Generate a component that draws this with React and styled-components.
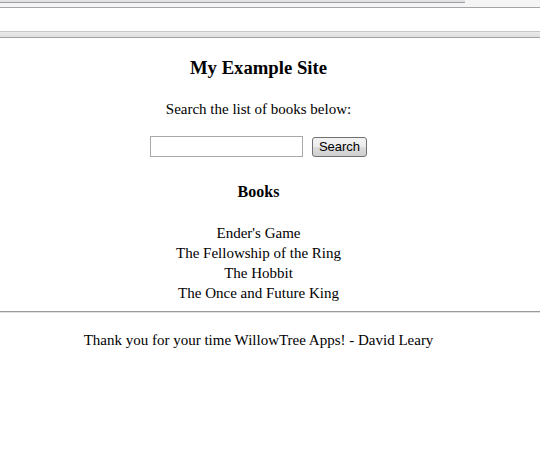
import React from 'react'
import styled, { createGlobalStyle } from 'styled-components'

const GlobalStyle = createGlobalStyle`
    html, body {
        margin: 0;
        padding: 0;
        background: #ffffff;
    }
    body {
        width: 540px;
        height: 453px;
        overflow: hidden;
        font-family: "Liberation Serif", "Times New Roman", serif;
        color: #000000;
    }
`

const Chrome = styled.div`
    display: flex;
    flex-direction: column;
`
const TabStrip = styled.div`
    display: flex;
    height: 7px;
    border-bottom: 1px solid #a5a5a5;
    background: #f5f5f5;
`
const TabEdge = styled.div`
    width: ${props => props.width}px;
    height: 2px;
    background: #e2e2e2;
    border-bottom: 1px solid #9a9ea6;
`
const AddressBand = styled.div`
    height: 23px;
    background: #ffffff;
`
const CommandBar = styled.div`
    height: 5px;
    border-top: 1px solid #c6c6c6;
    border-bottom: 1px solid #a3a3a3;
    background: linear-gradient(#ebebeb, #dfdfdf);
`

const Page = styled.main`
    display: flex;
    flex-direction: column;
`
const Content = styled.div`
    display: flex;
    flex-direction: column;
    align-items: center;
    width: 517px;
    padding-top: 19px;
`
const Title = styled.h3`
    margin: 0;
    font-size: 18.7px;
    line-height: 22px;
    font-weight: bold;
`
const Intro = styled.p`
    margin: 21px 0 0;
    font-size: 15px;
    line-height: 18px;
`
const SearchForm = styled.form`
    display: flex;
    align-items: center;
    gap: 9px;
    margin-top: 18px;
`
const TextInput = styled.input`
    box-sizing: border-box;
    width: 153px;
    height: 21px;
    margin: 0;
    padding: 1px 2px;
    border: 1px solid #a9a9a9;
    background: #ffffff;
`
const Button = styled.button`
    box-sizing: border-box;
    height: 20px;
    width: 55px;
    margin: 0;
    padding: 0 0 1px;
    border: 1px solid #707070;
    border-radius: 3px;
    background: linear-gradient(#f2f2f2 0%, #ebebeb 50%, #dddddd 51%, #cfcfcf 100%);
    font-family: "Liberation Sans", Arial, sans-serif;
    font-size: 13px;
    color: #000000;
`
const SectionTitle = styled.h4`
    margin: 26px 0 0;
    font-size: 16px;
    line-height: 18px;
    font-weight: bold;
`
const BookList = styled.ul`
    margin: 22px 0 0;
    padding: 0;
    list-style: none;
    text-align: center;
`
const Book = styled.li`
    font-size: 15px;
    line-height: 20px;
`
const Rule = styled.hr`
    width: 100%;
    margin: 8px 0 0;
    border: none;
    border-top: 1px solid #9a9a9a;
    border-bottom: 1px solid #e2e2e2;
    height: 0;
`
const Footer = styled.footer`
    width: 517px;
    margin-top: 18px;
    text-align: center;
    font-size: 15px;
    line-height: 18px;
`

const books = [
    "Ender's Game",
    'The Fellowship of the Ring',
    'The Hobbit',
    'The Once and Future King'
]

export default function App() {
    return (
        <>
            <GlobalStyle />
            <Chrome>
                <TabStrip>
                    <TabEdge width={465} />
                </TabStrip>
                <AddressBand />
                <CommandBar />
            </Chrome>
            <Page>
                <Content>
                    <Title>My Example Site</Title>
                    <Intro>Search the list of books below:</Intro>
                    <SearchForm onSubmit={e => e.preventDefault()}>
                        <TextInput type="text" />
                        <Button type="submit">Search</Button>
                    </SearchForm>
                    <SectionTitle>Books</SectionTitle>
                    <BookList>
                        {books.map(title => (
                            <Book key={title}>{title}</Book>
                        ))}
                    </BookList>
                </Content>
                <Rule />
                <Footer>Thank you for your time WillowTree Apps! - David Leary</Footer>
            </Page>
        </>
    )
}
